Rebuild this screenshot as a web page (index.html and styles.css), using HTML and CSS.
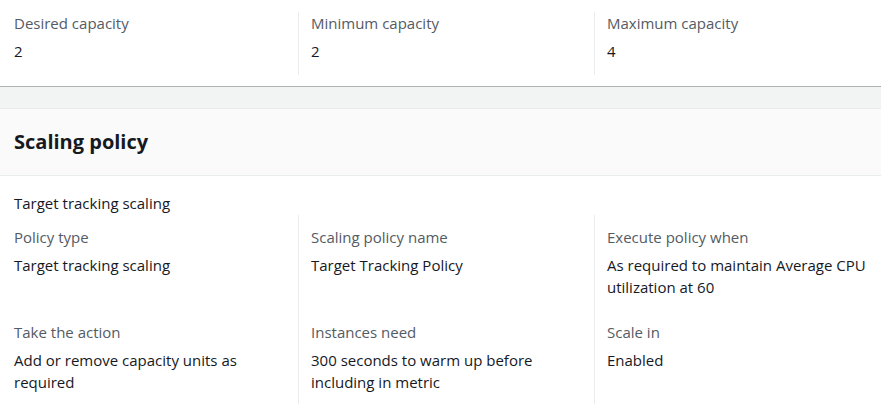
FILE: index.html
```html
<!DOCTYPE html>
<html lang="en">
<head>
<meta charset="utf-8">
<title>Scaling</title>
<link rel="stylesheet" href="styles.css">
</head>
<body>
  <section class="card card-top">
    <div class="grid">
      <div class="cell">
        <div class="label">Desired capacity</div>
        <div class="value">2</div>
      </div>
      <div class="cell">
        <div class="label">Minimum capacity</div>
        <div class="value">2</div>
      </div>
      <div class="cell">
        <div class="label">Maximum capacity</div>
        <div class="value">4</div>
      </div>
    </div>
  </section>
  <div class="gap"></div>
  <section class="card">
    <header class="card-header">
      <h2>Scaling policy</h2>
    </header>
    <div class="card-body">
      <div class="policy-title">Target tracking scaling</div>
      <div class="grid grid-policy">
        <div class="cell row1">
          <div class="label">Policy type</div>
          <div class="value">Target tracking scaling</div>
        </div>
        <div class="cell row1">
          <div class="label">Scaling policy name</div>
          <div class="value">Target Tracking Policy</div>
        </div>
        <div class="cell row1">
          <div class="label">Execute policy when</div>
          <div class="value">As required to maintain Average CPU utilization at 60</div>
        </div>
        <div class="cell row2">
          <div class="label">Take the action</div>
          <div class="value">Add or remove capacity units as required</div>
        </div>
        <div class="cell row2">
          <div class="label">Instances need</div>
          <div class="value">300 seconds to warm up before including in metric</div>
        </div>
        <div class="cell row2">
          <div class="label">Scale in</div>
          <div class="value">Enabled</div>
        </div>
      </div>
    </div>
  </section>
</body>
</html>
```
FILE: styles.css
```css
* { box-sizing: border-box; }
html, body { margin: 0; padding: 0; }
body {
  background: #ffffff;
  font-family: "Open Sans", "Noto Sans", "Liberation Sans", sans-serif;
  font-size: 15px;
  line-height: 22px;
  color: #16191f;
  width: 881px;
  height: 404px;
  overflow: hidden;
}
.card { background: #ffffff; }
.card-top {
  height: 87px;
  border-bottom: 1px solid #aeb3b6;
  padding-top: 12px;
}
.grid {
  display: grid;
  grid-template-columns: 298px 296px 1fr;
}
.cell { padding: 0 12px 0 14px; }
.cell:not(:nth-child(3n+1)) {
  border-left: 1px solid #eaeded;
  padding-left: 12px;
}
.card-top .cell { height: 63px; }
.label { color: #545b64; }
.value { margin-top: 6px; color: #16191f; }
.gap {
  height: 21px;
  background: #f2f3f3;
}
.card-header {
  background: #fafafa;
  border-top: 1px solid #eaeded;
  border-bottom: 1px solid #eaeded;
  height: 68px;
  padding: 0 14px;
  display: flex;
  align-items: center;
}
.card-header h2 {
  margin: 0;
  font-size: 20px;
  font-weight: 700;
  line-height: 26px;
  color: #16191f;
}
.card-body { padding-top: 16px; }
.policy-title { padding-left: 14px; height: 22px; margin-bottom: 1px; }
.row1 { padding-top: 11px; padding-bottom: 23px; }
.row2 { padding-bottom: 20px; }
```
